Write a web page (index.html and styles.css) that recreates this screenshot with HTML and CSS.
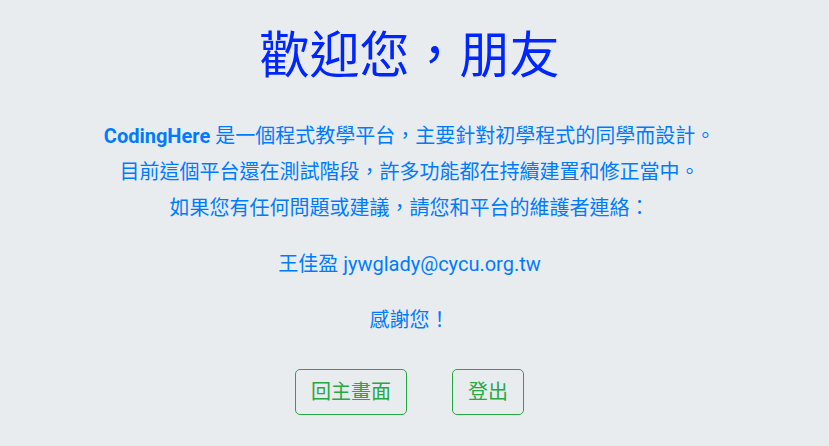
FILE: index.html
```html
<!DOCTYPE html>
<html lang="zh-Hant">
<head>
<meta charset="utf-8">
<title>CodingHere</title>
<link rel="stylesheet" href="styles.css">
</head>
<body>
<main class="page">
  <h1 class="title">歡迎您，朋友</h1>
  <p class="lead">
    <strong class="brand">CodingHere</strong> 是一個程式教學平台，主要針對初學程式的同學而設計。<br>
    目前這個平台還在測試階段，許多功能都在持續建置和修正當中。<br>
    如果您有任何問題或建議，請您和平台的維護者連絡：
  </p>
  <p class="contact">王佳盈 jywglady@cycu.org.tw</p>
  <p class="thanks">感謝您！</p>
  <div class="actions">
    <a class="btn" href="#">回主畫面</a>
    <a class="btn" href="#">登出</a>
  </div>
</main>
</body>
</html>
```
FILE: styles.css
```css
html, body {
  margin: 0;
  padding: 0;
  background: #e9ecef;
}
body {
  font-family: Roboto, "Noto Sans CJK TC", sans-serif;
  color: #007bff;
}
.page {
  display: flex;
  flex-direction: column;
  align-items: center;
  text-align: center;
  padding: 20px 10px 0 0;
}
.title {
  margin: 0;
  font-size: 50px;
  font-weight: 400;
  line-height: 72px;
  color: #0026ff;
}
.lead {
  margin: 26px 0 0;
  font-size: 20px;
  line-height: 36px;
}
.brand {
  font-weight: 700;
}
.contact {
  margin: 20px 0 0;
  font-size: 20px;
  line-height: 36px;
}
.thanks {
  margin: 20px 0 0;
  font-size: 20px;
  line-height: 36px;
}
.actions {
  display: flex;
  gap: 45px;
  margin-top: 31px;
}
.btn {
  display: block;
  padding: 7px 15px;
  font-size: 20px;
  line-height: 30px;
  color: #28a745;
  border: 1px solid #28a745;
  border-radius: 5px;
  text-decoration: none;
}
```
